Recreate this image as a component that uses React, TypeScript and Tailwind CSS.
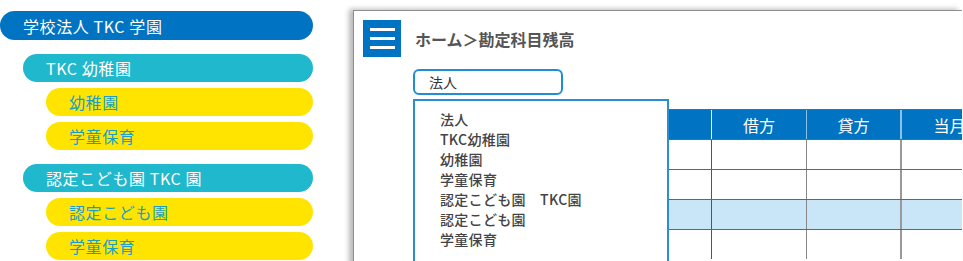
import React from "react";

const font = { fontFamily: '"Noto Sans CJK JP", "Noto Sans", sans-serif' };

function Pill({ level, label }: { level: 0 | 1 | 2; label: string }) {
  if (level === 0)
    return (
      <div className="h-[29px] rounded-full bg-[#0074c2] pl-[23px] flex items-center text-white text-[16px] tracking-[0.6px] whitespace-pre">
        {label}
      </div>
    );
  if (level === 1)
    return (
      <div className="ml-[23px] h-[28px] rounded-full bg-[#1fb8cc] pl-[23px] flex items-center text-white text-[16px] tracking-[0.6px] whitespace-pre">
        {label}
      </div>
    );
  return (
    <div className="ml-[46px] h-[28px] rounded-full bg-[#ffe400] pl-[23px] flex items-center text-[#1a9ec8] text-[16px] tracking-[0.6px] whitespace-pre">
      {label}
    </div>
  );
}

export default function App() {
  const items = ["法人", "TKC幼稚園", "幼稚園", "学童保育", "認定こども園　TKC園", "認定こども園", "学童保育"];
  const rows = [false, false, true, false];
  return (
    <div className="w-[963px] h-[261px] overflow-hidden bg-white flex" style={font}>
      <div className="w-[313px] shrink-0 pt-[11px] flex flex-col">
        <Pill level={0} label="学校法人 TKC 学園" />
        <div className="mt-[14px] flex flex-col gap-[6px]">
          <Pill level={1} label="TKC 幼稚園" />
          <Pill level={2} label="幼稚園" />
          <Pill level={2} label="学童保育" />
        </div>
        <div className="mt-[14px] flex flex-col gap-[6px]">
          <Pill level={1} label="認定こども園 TKC 園" />
          <Pill level={2} label="認定こども園" />
          <Pill level={2} label="学童保育" />
        </div>
      </div>
      <div className="ml-[40px] mt-[10px] w-[609px] h-[260px] shrink-0 relative border-l border-t border-[#8f8f8f] bg-white shadow-[-4px_-1px_5px_rgba(0,0,0,0.28)]">
        <div className="pl-[9px] pt-[9px] flex items-center gap-[14px]">
          <div className="w-[38px] h-[37px] bg-[#0074c2] flex flex-col items-center justify-center gap-[6px]">
            <div className="w-[25px] h-[3px] bg-white" />
            <div className="w-[25px] h-[3px] bg-white" />
            <div className="w-[25px] h-[3px] bg-white" />
          </div>
          <div className="text-[16px] font-bold text-[#555]">ホーム＞勘定科目残高</div>
        </div>
        <div className="ml-[59px] mt-[12px] w-[150px] h-[26px] border-2 border-[#1f8fd3] rounded-[6px] pl-[14px] flex items-center text-[14px] text-[#333]">
          法人
        </div>
        <div className="ml-[59px] mt-[14px] flex flex-col">
          <div className="flex h-[30px] bg-[#0074c2] border-t border-[#666] text-white text-[16px]">
            <div className="w-[299px] shrink-0 border-r border-white" />
            <div className="w-[95px] shrink-0 border-r border-[#8cc0e6] flex items-center justify-center">借方</div>
            <div className="w-[95px] shrink-0 border-r-2 border-[#8cc0e6] flex items-center justify-center">貸方</div>
            <div className="w-[95px] shrink-0 flex items-center justify-center">当月</div>
          </div>
          {rows.map((hl, i) => (
            <div key={i} className={`flex h-[30px] border-t border-[#666] ${hl ? "bg-[#c8e6f8]" : "bg-white"}`}>
              <div className="w-[299px] shrink-0 border-r border-[#555]" />
              <div className="w-[95px] shrink-0 border-r border-[#888]" />
              <div className="w-[95px] shrink-0 border-r-2 border-[#999]" />
              <div className="w-[95px] shrink-0" />
            </div>
          ))}
        </div>
        <div className="absolute left-[59px] top-[88px] w-[256px] h-[200px] bg-white border-2 border-[#2a8fd0] pl-[25px] pt-[8px] flex flex-col">
          {items.map((t, i) => (
            <div key={i} className="h-[20px] leading-[20px] text-[14px] text-[#444] font-medium whitespace-pre tracking-[0.3px]">
              {t}
            </div>
          ))}
        </div>
      </div>
    </div>
  );
}
